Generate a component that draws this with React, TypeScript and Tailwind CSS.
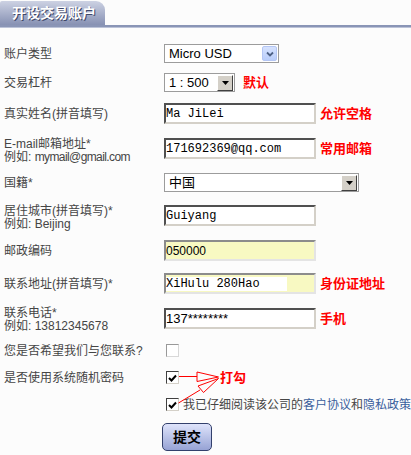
import React from "react";

const cjk = "font-['Liberation_Sans','Noto_Sans_CJK_SC',sans-serif]";
const mono = "font-['Liberation_Mono','Noto_Sans_CJK_SC',monospace]";

function TextBox({value, tone = "white", textClass = mono, cover = false}: {value: string; tone?: "white" | "yellow"; textClass?: string; cover?: boolean}) {
  const frame =
    tone === "yellow"
      ? "border-t-[#8c8c8c] border-l-[#8c8c8c] border-b-[#e4e4e4] border-r-[#e4e4e4] bg-[#f8f9c2]"
      : "border-t-[#505050] border-l-[#505050] border-b-[#d4d0c8] border-r-[#d4d0c8] bg-white";
  return (
    <div className={`h-[21px] w-[152px] shrink-0 border-2 ${frame} flex items-center text-[12px] leading-[14px] text-black`}>
      <span className={`${textClass} ${cover ? "bg-white w-[121px] h-[14px]" : ""}`}>{value}</span>
    </div>
  );
}

function XpSelect() {
  return (
    <div className="h-[19px] w-[115px] border border-[#9c9c9c] bg-white flex items-center">
      <span className="pl-[4px] text-[13px] text-black">Micro USD</span>
      <div className="ml-auto mr-[1px] w-[15px] h-[15px] rounded-[2px] border border-[#b4c6f4] bg-linear-to-b from-[#d6e2fe] to-[#b9cdfa] flex items-center justify-center">
        <svg width="8" height="6" viewBox="0 0 8 6">
          <path d="M1 1.5 L4 4.5 L7 1.5" fill="none" stroke="#4d6185" strokeWidth="1.8" />
        </svg>
      </div>
    </div>
  );
}

function ClassicSelect({text, width}: {text: string; width: string}) {
  return (
    <div className={`h-[19px] ${width} border border-[#9c9c9c] bg-white flex items-center`}>
      <span className="pl-[4px] text-[13px] text-black">{text}</span>
      <div className="ml-auto mr-[1px] w-[16px] h-[16px] bg-[#d4d0c8] border border-t-white border-l-white border-b-[#404040] border-r-[#404040] flex items-center justify-center">
        <svg width="7" height="4" viewBox="0 0 7 4">
          <path d="M0 0 H7 L3.5 4 Z" fill="#000" />
        </svg>
      </div>
    </div>
  );
}

function Check({on}: {on: boolean}) {
  return (
    <div
      className={`w-[13px] h-[13px] shrink-0 border ${
        on ? "border-t-[#404040] border-l-[#404040] border-b-[#d4d0c8] border-r-[#d4d0c8]" : "border-t-[#999] border-l-[#999] border-b-[#d8d8d8] border-r-[#d8d8d8]"
      } bg-white flex items-center justify-center`}
    >
      {on && (
        <svg width="9" height="8" viewBox="0 0 9 8">
          <path d="M1 4 L3.5 6.5 L8 1.5" fill="none" stroke="#000" strokeWidth="2" />
        </svg>
      )}
    </div>
  );
}

const note = "text-[13px] leading-[14px] font-bold text-[#ff0000] whitespace-nowrap";

export default function App() {
  return (
    <div className={`relative w-[411px] h-[455px] overflow-hidden bg-[#fcfcfc] text-[12px] leading-[14px] text-[#454545] ${cjk}`}>
      {/* header */}
      <div className="flex h-[25px] items-end">
        <div className="w-[105px] h-[24px] rounded-tr-[9px] rounded-tl-[2px] bg-linear-to-b from-[#cdd2e3] to-[#8791b3] pl-[12px] flex items-center text-[14px] font-bold text-white [text-shadow:1px_1px_0_#3e4668]">
          开设交易账户
        </div>
      </div>
      <div className="h-[2px] bg-[#8a95b6]" />
      <div className="h-[1px] bg-[#bcc3d8]" />

      <div className="flex flex-col">
        <div className="mt-[16px] h-[19px] flex items-center">
          <div className="w-[164px] pl-[4px]">账户类型</div>
          <XpSelect />
        </div>

        <div className="mt-[10px] h-[19px] flex items-center">
          <div className="w-[164px] pl-[4px]">交易杠杆</div>
          <ClassicSelect text="1 : 500" width="w-[71px]" />
          <span className={`ml-[8px] ${note}`}>默认</span>
        </div>

        <div className="mt-[11px] h-[21px] flex items-center">
          <div className="w-[164px] pl-[4px]">真实姓名(拼音填写)</div>
          <TextBox value="Ma JiLei" />
          <span className={`ml-[4px] ${note}`}>允许空格</span>
        </div>

        <div className="mt-[14px] h-[26px] flex items-start">
          <div className="w-[164px] pl-[4px] leading-[13px]">
            <div>E-mail邮箱地址*</div>
            <div>
              例如: <span className="tracking-[-0.6px]">mymail@gmail.com</span>
            </div>
          </div>
          <div className="flex items-center">
            <TextBox value="171692369@qq.com" />
            <span className={`ml-[4px] ${note}`}>常用邮箱</span>
          </div>
        </div>

        <div className="mt-[9px] h-[19px] flex items-center">
          <div className="w-[164px] pl-[4px]">国籍*</div>
          <ClassicSelect text="中国" width="w-[195px]" />
        </div>

        <div className="mt-[13px] h-[26px] flex items-start">
          <div className="w-[164px] pl-[4px] leading-[13px]">
            <div>居住城市(拼音填写)*</div>
            <div>例如: Beijing</div>
          </div>
          <TextBox value="Guiyang" />
        </div>

        <div className="mt-[9px] h-[21px] flex items-center">
          <div className="w-[164px] pl-[4px]">邮政编码</div>
          <TextBox value="050000" tone="yellow" textClass="font-['Liberation_Sans',sans-serif]" />
        </div>

        <div className="mt-[12px] h-[21px] flex items-center">
          <div className="w-[164px] pl-[4px]">联系地址(拼音填写)*</div>
          <TextBox value="XiHulu 280Hao" tone="yellow" cover />
          <span className={`ml-[4px] ${note}`}>身份证地址</span>
        </div>

        <div className="mt-[13px] h-[26px] flex items-start">
          <div className="w-[164px] pl-[4px] leading-[13px]">
            <div>联系电话*</div>
            <div>例如: 13812345678</div>
          </div>
          <div className="mt-[1px] flex items-center">
            <TextBox value="137********" textClass="font-['Liberation_Sans',sans-serif] text-[13px]" />
            <span className={`ml-[4px] ${note}`}>手机</span>
          </div>
        </div>

        <div className="mt-[11px] h-[13px] flex items-center">
          <div className="w-[166px] pl-[4px]">您是否希望我们与您联系?</div>
          <Check on={false} />
        </div>

        <div className="mt-[14px] h-[13px] flex items-center">
          <div className="w-[166px] pl-[4px]">是否使用系统随机密码</div>
          <Check on />
          <span className={`ml-[41px] ${note}`}>打勾</span>
        </div>

        <div className="mt-[14px] h-[13px] flex items-center">
          <div className="w-[166px]" />
          <Check on />
          <span className="ml-[4px] whitespace-nowrap">
            我已仔细阅读该公司的<span className="text-[#3a5f9c]">客户协议</span>和<span className="text-[#3a5f9c]">隐私政策</span>
          </span>
        </div>

        <div className="mt-[12px] h-[28px] flex">
          <div className="w-[162px]" />
          <button className="w-[50px] h-[28px] rounded-[5px] border border-[#33406c] bg-linear-to-b from-[#dfe4fb] to-[#97a3d4] text-[14px] font-bold text-black">
            提交
          </button>
        </div>
      </div>

      {/* annotation arrows */}
      <svg className="absolute left-0 top-0 pointer-events-none" width="411" height="455" viewBox="0 0 411 455">
        <g fill="none" stroke="#ff0000" strokeWidth="1">
          <path d="M179 376.5 H197" />
          <path d="M197 372 L218.5 377 L197 381.5 Z" />
          <path d="M178.5 403 L200 390" />
          <path d="M198 386 L218.5 378.5 L203.5 392.5 Z" />
        </g>
      </svg>
    </div>
  );
}
